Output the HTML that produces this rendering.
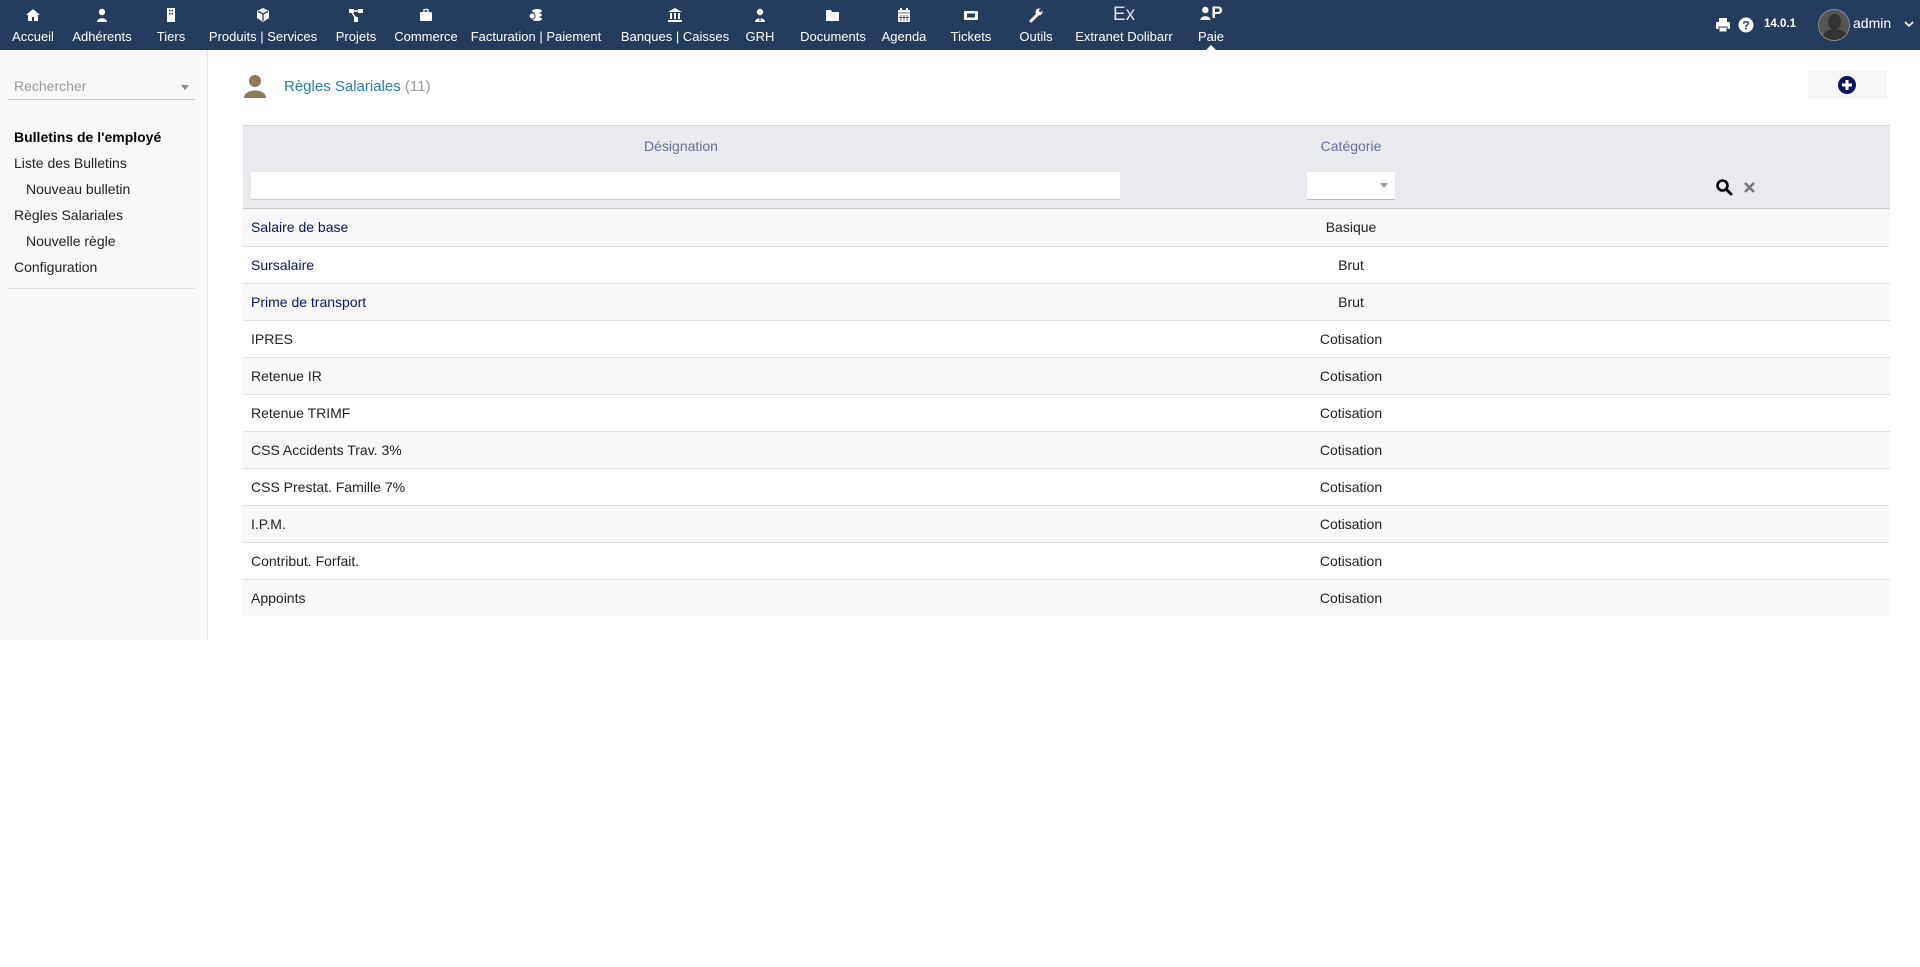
<!DOCTYPE html>
<html><head><meta charset="utf-8">
<style>
*{box-sizing:border-box;margin:0;padding:0}
body{width:1920px;height:967px;background:#fff;font-family:"Liberation Sans",Arial,sans-serif;font-size:14px;color:#222;position:relative;overflow:hidden}
#top{position:absolute;left:0;top:0;width:1920px;height:50px;background:#263c5c}
.mi{position:absolute;top:0;height:50px;transform:translateX(-50%);color:#fff;text-align:center;white-space:nowrap}
.mi .ic{position:absolute;left:50%;top:7px;transform:translateX(-50%);width:16px;height:16px}
.mi .lb{position:absolute;left:50%;transform:translateX(-50%);top:29px;font-size:13px;white-space:nowrap}
#side{position:absolute;left:0;top:50px;width:208px;height:590px;background:#f8f8f8;border-right:1px solid #e4e4e4}
.sl{position:absolute;left:14px;font-size:14px;color:#222}
a{color:#0a1464;text-decoration:none}
a.d{color:#222}
table{position:absolute;left:243px;top:125px;width:1647px;border-collapse:collapse}
td{height:37px;border-bottom:1px solid #e0e0e0;padding:0 8px;font-size:14px}
tr:nth-child(odd) td{background:#f8f8f8}
.c{text-align:center}
</style></head><body>
<div id="top">
<div class="mi" style="left:33px"><svg class="ic" viewBox="0 0 16 16"><path d="M8 2L1 8h2v6h4v-4h2v4h4V8h2z" fill="#fff"/></svg><span class="lb">Accueil</span></div>
<div class="mi" style="left:102px"><svg class="ic" viewBox="0 0 16 16"><circle cx="8" cy="5" r="3.2" fill="#fff"/><path d="M3 15c0-5 10-5 10 0z" fill="#fff"/></svg><span class="lb">Adhérents</span></div>
<div class="mi" style="left:171px"><svg class="ic" viewBox="0 0 16 16"><rect x="4" y="1" width="8" height="14" fill="#fff"/><rect x="6" y="3" width="1.5" height="1.5" fill="#263c5c"/><rect x="8.5" y="3" width="1.5" height="1.5" fill="#263c5c"/><rect x="6" y="6" width="1.5" height="1.5" fill="#263c5c"/><rect x="8.5" y="6" width="1.5" height="1.5" fill="#263c5c"/></svg><span class="lb">Tiers</span></div>
<div class="mi" style="left:263px"><svg class="ic" viewBox="0 0 16 16"><path d="M8 1l6 3v7l-6 4-6-4V4z" fill="#fff"/><path d="M8 7L3 4.5M8 7l5-2.5M8 7v7" stroke="#263c5c" stroke-width="1.3"/></svg><span class="lb">Produits | Services</span></div>
<div class="mi" style="left:356px"><svg class="ic" viewBox="0 0 16 16"><rect x="1" y="2" width="5" height="4" fill="#fff"/><rect x="10" y="2" width="5" height="4" fill="#fff"/><rect x="6" y="10" width="4" height="5" fill="#fff"/><path d="M4 6l4 5M6 4h4" stroke="#fff" stroke-width="1.5"/></svg><span class="lb">Projets</span></div>
<div class="mi" style="left:426px"><svg class="ic" viewBox="0 0 16 16"><rect x="2" y="5" width="12" height="9" rx="1" fill="#fff"/><rect x="6" y="2.5" width="4" height="3" fill="none" stroke="#fff" stroke-width="1.3"/></svg><span class="lb">Commerce</span></div>
<div class="mi" style="left:536px"><svg class="ic" viewBox="0 0 16 16"><ellipse cx="9" cy="4" rx="5" ry="2" fill="#fff"/><ellipse cx="9" cy="8" rx="5" ry="2" fill="#fff"/><ellipse cx="9" cy="12" rx="5" ry="2" fill="#fff"/><circle cx="4" cy="9" r="3" fill="#fff" stroke="#263c5c"/></svg><span class="lb">Facturation | Paiement</span></div>
<div class="mi" style="left:675px"><svg class="ic" viewBox="0 0 16 16"><path d="M8 1l7 4H1z" fill="#fff"/><rect x="3" y="6" width="2" height="6" fill="#fff"/><rect x="7" y="6" width="2" height="6" fill="#fff"/><rect x="11" y="6" width="2" height="6" fill="#fff"/><rect x="1" y="13" width="14" height="2" fill="#fff"/></svg><span class="lb">Banques | Caisses</span></div>
<div class="mi" style="left:760px"><svg class="ic" viewBox="0 0 16 16"><circle cx="8" cy="5" r="3.2" fill="#fff"/><path d="M3 15c0-5 10-5 10 0z" fill="#fff"/><path d="M8 10v4" stroke="#263c5c" stroke-width="1.2"/></svg><span class="lb">GRH</span></div>
<div class="mi" style="left:833px"><svg class="ic" viewBox="0 0 16 16"><path d="M1 3h5l1 2h7v9H1z" fill="#fff"/></svg><span class="lb">Documents</span></div>
<div class="mi" style="left:904px"><svg class="ic" viewBox="0 0 16 16"><rect x="2" y="3" width="12" height="12" fill="#fff"/><rect x="4" y="1" width="2" height="3" fill="#fff"/><rect x="10" y="1" width="2" height="3" fill="#fff"/><path d="M2 6h12M5 8v6M8 8v6M11 8v6M3 10.5h10" stroke="#263c5c" stroke-width=".8"/></svg><span class="lb">Agenda</span></div>
<div class="mi" style="left:971px"><svg class="ic" viewBox="0 0 16 16"><rect x="1" y="4" width="14" height="9" rx="1" fill="#fff"/><rect x="4" y="6.5" width="8" height="4" fill="#263c5c"/></svg><span class="lb">Tickets</span></div>
<div class="mi" style="left:1036px"><svg class="ic" viewBox="0 0 16 16"><path d="M3 14l6-6" stroke="#fff" stroke-width="3" stroke-linecap="round"/><circle cx="11" cy="5" r="3.5" fill="#fff"/><circle cx="12.5" cy="3.5" r="1.5" fill="#263c5c"/></svg><span class="lb">Outils</span></div>
<div class="mi" style="left:1124px"><span style="position:absolute;left:50%;top:4px;transform:translateX(-50%);font-size:19px;color:#dde">Ex</span><span class="lb">Extranet Dolibarr</span></div>
<div class="mi" style="left:1211px"><span style="position:absolute;left:50%;top:3px;transform:translateX(-50%);font-size:17px;font-weight:bold;display:flex;align-items:center"><svg width="12" height="16" viewBox="0 0 12 16"><circle cx="6" cy="5" r="3.2" fill="#fff"/><path d="M1 15c0-5 10-5 10 0z" fill="#fff"/></svg>P</span><span class="lb">Paie</span><span style="position:absolute;left:50%;bottom:0;transform:translateX(-50%);border:5px solid transparent;border-bottom-color:#fff;border-top:0"></span></div>
<svg style="position:absolute;left:1715px;top:17px" width="16" height="16" viewBox="0 0 16 16"><rect x="4" y="1" width="8" height="4" fill="#fff"/><rect x="1" y="5" width="14" height="7" rx="1" fill="#fff"/><rect x="4" y="10" width="8" height="5" fill="#fff" stroke="#263c5c"/></svg>
<svg style="position:absolute;left:1738px;top:17px" width="16" height="16" viewBox="0 0 16 16"><circle cx="8" cy="8" r="7.5" fill="#fff"/><text x="8" y="12.5" font-size="12" font-weight="bold" text-anchor="middle" fill="#263c5c" font-family="Liberation Sans">?</text></svg>
<span style="position:absolute;left:1764px;top:18px;color:#fff;font-size:11.5px;font-weight:bold">14.0.1</span>
<div style="position:absolute;left:1818px;top:9px;width:32px;height:32px;border-radius:50%;background:#555;border:1px solid #8a8a8a;overflow:hidden"><div style="position:absolute;left:9px;top:4px;width:13px;height:16px;border-radius:50%;background:#333"></div><div style="position:absolute;left:3px;top:19px;width:26px;height:20px;border-radius:50%;background:#333"></div></div>
<span style="position:absolute;left:1853px;top:15px;color:#fff;font-size:14px">admin</span>
<svg style="position:absolute;left:1904px;top:20px" width="10" height="8" viewBox="0 0 10 8"><path d="M1 2l4 4 4-4" stroke="#fff" stroke-width="1.6" fill="none"/></svg>
</div>

<div id="side">
<div style="position:absolute;left:8px;top:28px;width:187px;height:22px;border-bottom:1px solid #ccc"><span style="position:absolute;left:6px;top:0;color:#999;font-size:14px">Rechercher</span><span style="position:absolute;right:6px;top:7px;border:4px solid transparent;border-top:5px solid #888"></span></div>
<div class="sl" style="top:79px;font-weight:bold;color:#000">Bulletins de l'employé</div>
<div class="sl" style="top:105px">Liste des Bulletins</div>
<div class="sl" style="top:131px;left:26px">Nouveau bulletin</div>
<div class="sl" style="top:157px">Règles Salariales</div>
<div class="sl" style="top:183px;left:26px">Nouvelle règle</div>
<div class="sl" style="top:209px">Configuration</div>
<div style="position:absolute;left:8px;top:238px;width:187px;border-top:1px solid #ddd"></div>
</div>

<svg style="position:absolute;left:244px;top:74px" width="22" height="24" viewBox="0 0 22 24"><circle cx="11" cy="7" r="6" fill="#8c7a5a"/><path d="M0 24c0-10 22-10 22 0z" fill="#8c7a5a"/></svg>
<div style="position:absolute;left:284px;top:78px;font-size:15px;color:#2b8096">Règles Salariales <span style="color:#999">(11)</span></div>
<div style="position:absolute;left:1808px;top:71px;width:79px;height:28px;background:#f6f6f6"></div>
<svg style="position:absolute;left:1838px;top:76px" width="18" height="18" viewBox="0 0 18 18"><circle cx="9" cy="9" r="9" fill="#0a1464"/><path d="M9 4v10M4 9h10" stroke="#fff" stroke-width="3"/></svg>

<div style="position:absolute;left:243px;top:125px;width:1647px;height:84px;background:#e9eaed;border-top:1px solid #d6d6d6;border-bottom:1px solid #ccc">
<span style="position:absolute;left:438px;top:12px;width:0;white-space:nowrap;display:flex;justify-content:center;color:#67719a;font-size:14px">Désignation</span>
<span style="position:absolute;left:1108px;top:12px;width:0;white-space:nowrap;display:flex;justify-content:center;color:#67719a;font-size:14px">Catégorie</span>
<div style="position:absolute;left:8px;top:46px;width:869px;height:28px;background:#fff;border-bottom:1px solid #ccc"></div>
<div style="position:absolute;left:1064px;top:46px;width:88px;height:28px;background:#fff;border-bottom:1px solid #bbb"><span style="position:absolute;right:7px;top:11px;border:4px solid transparent;border-top:5px solid #999"></span></div>
<svg style="position:absolute;left:1472px;top:52px" width="18" height="18" viewBox="0 0 18 18"><circle cx="7.5" cy="7.5" r="5" stroke="#000" stroke-width="2.6" fill="none"/><path d="M11 11l5 5" stroke="#000" stroke-width="3" stroke-linecap="round"/></svg>
<svg style="position:absolute;left:1500px;top:55px" width="13" height="13" viewBox="0 0 13 13"><path d="M2 2l9 9M11 2l-9 9" stroke="#777" stroke-width="2.6"/></svg>
</div>

<table style="top:209px">
<colgroup><col style="width:877px"><col style="width:462px"><col></colgroup>
<tr><td><a>Salaire de base</a></td><td class="c">Basique</td><td></td></tr>
<tr><td><a>Sursalaire</a></td><td class="c">Brut</td><td></td></tr>
<tr><td><a>Prime de transport</a></td><td class="c">Brut</td><td></td></tr>
<tr><td><a class="d">IPRES</a></td><td class="c">Cotisation</td><td></td></tr>
<tr><td><a class="d">Retenue IR</a></td><td class="c">Cotisation</td><td></td></tr>
<tr><td><a class="d">Retenue TRIMF</a></td><td class="c">Cotisation</td><td></td></tr>
<tr><td><a class="d">CSS Accidents Trav. 3%</a></td><td class="c">Cotisation</td><td></td></tr>
<tr><td><a class="d">CSS Prestat. Famille 7%</a></td><td class="c">Cotisation</td><td></td></tr>
<tr><td><a class="d">I.P.M.</a></td><td class="c">Cotisation</td><td></td></tr>
<tr><td><a class="d">Contribut. Forfait.</a></td><td class="c">Cotisation</td><td></td></tr>
<tr><td style="border-bottom:0"><a class="d">Appoints</a></td><td class="c" style="border-bottom:0">Cotisation</td><td style="border-bottom:0"></td></tr>
</table>
</body></html>
